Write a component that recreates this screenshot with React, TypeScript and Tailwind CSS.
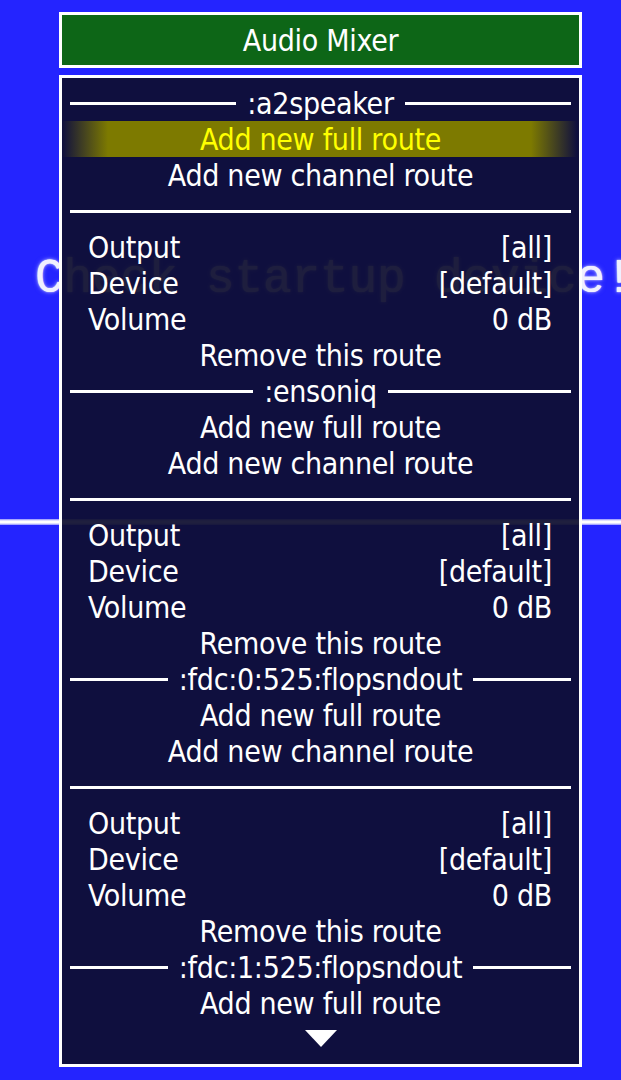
import React from "react";

const FONT = '"DejaVu Sans Condensed", "DejaVu Sans", sans-serif';

function TitleRow({ label }: { label: string }) {
  return (
    <div className="flex h-[36px] items-center gap-[11px] px-[8px]">
      <div className="h-[3px] flex-1 bg-white" />
      <span className="text-white">{label}</span>
      <div className="h-[3px] flex-1 bg-white" />
    </div>
  );
}

function CenterRow({ label, selected }: { label: string; selected?: boolean }) {
  return (
    <div
      className={
        selected
          ? "flex h-[36px] items-center justify-center bg-[linear-gradient(to_right,transparent_0px,#7d7a00_46px,#7d7a00_calc(100%-48px),transparent_calc(100%-2px))] text-[#ffff00]"
          : "flex h-[36px] items-center justify-center text-white"
      }
    >
      {label}
    </div>
  );
}

function Separator() {
  return (
    <div className="flex h-[36px] items-center px-[8px]">
      <div className="h-[3px] flex-1 bg-white" />
    </div>
  );
}

function ValueRow({ label, value }: { label: string; value: string }) {
  return (
    <div className="flex h-[36px] items-center justify-between pl-[26px] pr-[27px] text-white">
      <span>{label}</span>
      <span>{value}</span>
    </div>
  );
}

function RouteBlock() {
  return (
    <>
      <Separator />
      <ValueRow label="Output" value="[all]" />
      <ValueRow label="Device" value="[default]" />
      <ValueRow label="Volume" value="0 dB" />
      <CenterRow label="Remove this route" />
    </>
  );
}

export default function App() {
  return (
    <div className="relative h-[1080px] w-[621px] overflow-hidden bg-[#2424ff]">
      {/* emulated screen behind the menu */}
      <div className="absolute inset-0 flex flex-col">
        <div
          className="mt-[253px] whitespace-pre pl-[35px] text-[47.5px] leading-[52px] text-[#f0f0ff] [text-shadow:0_0_1px_#ffffff,0_0_3px_#9a9aff,0_0_5px_#7a7aff]"
          style={{ fontFamily: '"Liberation Mono", "DejaVu Sans Mono", monospace' }}
        >
          Check startup device!
        </div>
        <div className="mt-[214px] h-[6px] w-full bg-[linear-gradient(to_bottom,#8c8cff,#ffffff_35%,#ffffff_65%,#8c8cff)]" />
      </div>

      {/* menu overlay */}
      <div
        className="relative flex flex-col pt-[12px] pl-[59px] text-[30px] tracking-[-0.3px]"
        style={{ fontFamily: FONT }}
      >
        <div className="flex h-[56px] w-[523px] items-center justify-center border-[3px] border-white bg-[rgba(12,106,9,0.94)] pt-[1px] text-white">
          Audio Mixer
        </div>
        <div className="mt-[7px] flex w-[523px] flex-col border-[3px] border-white bg-[rgba(14,14,47,0.93)] py-[7px]">
          <TitleRow label=":a2speaker" />
          <CenterRow label="Add new full route" selected />
          <CenterRow label="Add new channel route" />
          <RouteBlock />
          <TitleRow label=":ensoniq" />
          <CenterRow label="Add new full route" />
          <CenterRow label="Add new channel route" />
          <RouteBlock />
          <TitleRow label=":fdc:0:525:flopsndout" />
          <CenterRow label="Add new full route" />
          <CenterRow label="Add new channel route" />
          <RouteBlock />
          <TitleRow label=":fdc:1:525:flopsndout" />
          <CenterRow label="Add new full route" />
          <div className="flex h-[36px] items-start justify-center pt-[9px]">
            <svg width="32" height="17" viewBox="0 0 32 17">
              <polygon points="0,0 32,0 16,17" fill="#ffffff" />
            </svg>
          </div>
        </div>
      </div>
    </div>
  );
}
